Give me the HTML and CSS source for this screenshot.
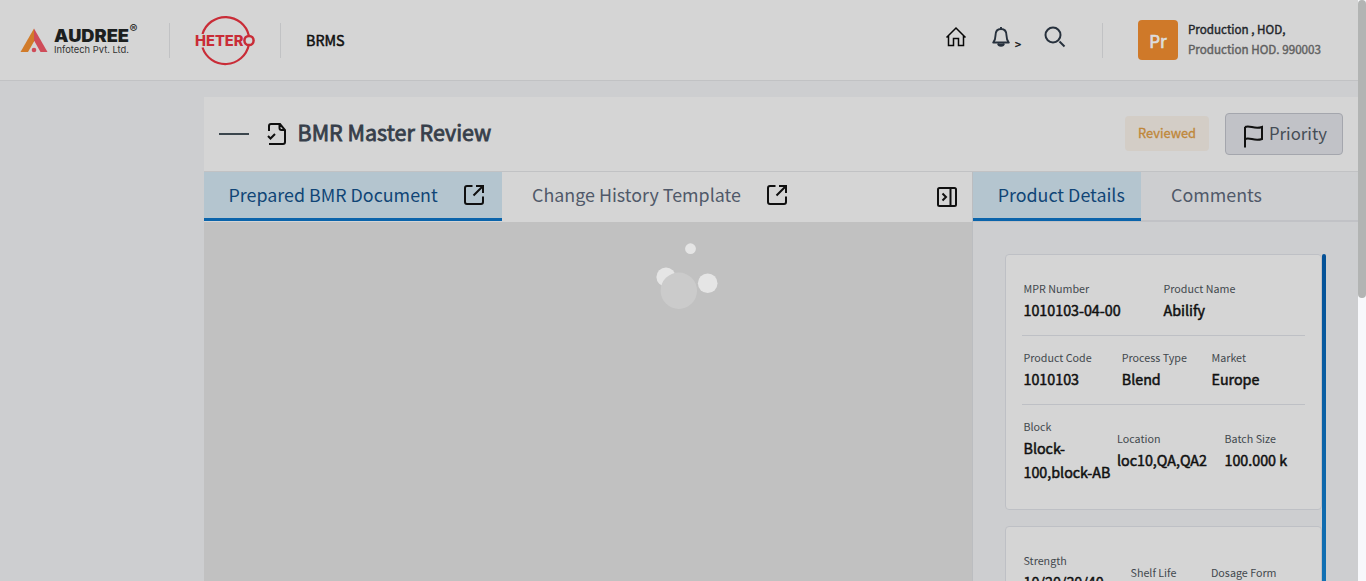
FILE: index.html
```html
<!DOCTYPE html>
<html lang="en">
<head>
<meta charset="utf-8">
<title>BMR Master Review</title>
<link rel="stylesheet" href="styles.css">
</head>
<body>
<div class="app">
  <div class="page">
    <header class="header">
      <svg class="logo-audree" width="122" height="36" viewBox="0 -2 122 36">
        <path d="M14 5.500 L0.500 29 H8 L14 18.500Z" fill="#d17b2a"/>
        <path d="M14 5.500 L27.500 29 H20.500 L14 17.500Z" fill="#cf4c59"/>
        <circle cx="14" cy="27" r="2.300" fill="#cf4c59"/>
        <text x="34" y="18.500" class="audree-name" textLength="75" lengthAdjust="spacingAndGlyphs">AUDREE</text>
        <text x="34" y="29.500" class="audree-sub" textLength="75" lengthAdjust="spacingAndGlyphs">Infotech Pvt. Ltd.</text>
        <text x="109.500" y="9.500" class="audree-reg">®</text>
      </svg>
      <i class="divider"></i>
      <svg class="logo-hetero" width="62" height="52" viewBox="0 0 62 52">
        <g fill="none" stroke="#c92c37" stroke-width="2.200">
          <path d="M8.500 20A24 24 0 0 1 54.800 21.500"/>
          <path d="M8.500 33.500A24 24 0 0 0 54.800 31"/>
          <circle cx="55" cy="26.500" r="4.600" stroke-width="2.500"/>
        </g>
        <text x="1" y="31.500" class="hetero-name" textLength="48.500" lengthAdjust="spacingAndGlyphs">HETER</text>
      </svg>
      <i class="divider"></i>
      <span class="product">BRMS</span>
      <nav class="actions">
        <svg class="home" width="22" height="22" viewBox="0 0 22 22" fill="none" stroke="#080808" stroke-width="1.500"><path d="M1.500 11.500 11 2l9.500 9.500M3.500 10v9.500h5V12.500h5v7h5V10"/></svg>
        <svg class="bell" width="18" height="22" viewBox="0 0 18 22" fill="none" stroke="#27313d" stroke-width="1.900" stroke-linejoin="round"><path d="M9 1v2M3.500 9.500C3.500 5.500 5.500 3 9 3s5.500 2.500 5.500 6.500c0 4 1 5.500 2.300 7H1.200c1.300-1.500 2.300-3 2.300-7Z"/><path d="M6 17.500c.5 3 5.500 3 6 0" fill="#27313d"/></svg>
        <span class="caret">&gt;</span>
        <svg class="search" width="22" height="22" viewBox="0 0 22 22" fill="none" stroke="#27313d" stroke-width="2"><circle cx="9" cy="9" r="7.500"/><path d="m15.500 15.500 5 5"/></svg>
      </nav>
      <i class="divider"></i>
      <div class="avatar">Pr</div>
      <div class="user"><div class="user-name">Production , HOD,</div><div class="user-role">Production HOD. 990003</div></div>
    </header>
    <main class="main">
      <section class="title-bar">
        <i class="dash"></i>
        <svg class="doc" width="20" height="24" viewBox="0 0 20 24" fill="none" stroke="#101010" stroke-width="2"><path d="M2 9V4q0-2 2-2h9l5 6v12q0 2-2 2H2M12.500 2v4q0 2 2 2H18M1 14l2.500 2.500L8 12"/></svg>
        <h1 class="title">BMR Master Review</h1>
        <span class="status">Reviewed</span>
        <button class="priority">
          <svg width="20" height="24" viewBox="0 0 20 24" fill="none" stroke="#101010" stroke-width="2"><path d="M2 23.500V3M2 3c5-2.500 9 3 17 0v12c-8 3-12-2.500-17 0"/></svg>
          <span>Priority</span>
        </button>
      </section>
      <div class="columns">
        <section class="document">
          <div class="tabs">
            <div class="tab tab-doc active"><span>Prepared BMR Document</span>
              <svg width="22" height="22" viewBox="0 0 22 22" fill="none" stroke="#101010" stroke-width="2"><path d="M9.500 2H4Q2 2 2 4v14q0 2 2 2h14q2 0 2-2v-5.500M13 2h7v7M20 2l-9.500 9.500"/></svg></div>
            <div class="tab tab-history"><span>Change History Template</span>
              <svg width="22" height="22" viewBox="0 0 22 22" fill="none" stroke="#101010" stroke-width="2"><path d="M9.500 2H4Q2 2 2 4v14q0 2 2 2h14q2 0 2-2v-5.500M13 2h7v7M20 2l-9.500 9.500"/></svg></div>
            <svg class="collapse" width="22" height="22" viewBox="0 0 22 22" fill="none" stroke="#101010" stroke-width="2"><rect x="2" y="2" width="18" height="18" rx="1.500"/><path d="M14.500 2v18M6.500 7.500 10 11l-3.500 3.500"/></svg>
          </div>
          <div class="preview"></div>
        </section>
        <aside class="details">
          <div class="tabs side-tabs">
            <div class="tab tab-product active"><span>Product Details</span></div>
            <div class="tab tab-comments"><span>Comments</span></div>
          </div>
          <div class="cards">
            <div class="card-list">
              <div class="card">
                <div class="row row-a"><div><div class="label">MPR Number</div><div class="value">1010103-04-00</div></div><div><div class="label">Product Name</div><div class="value">Abilify</div></div></div>
                <div class="row row-b"><div><div class="label">Product Code</div><div class="value">1010103</div></div><div><div class="label">Process Type</div><div class="value">Blend</div></div><div><div class="label">Market</div><div class="value">Europe</div></div></div>
                <div class="row row-c"><div><div class="label">Block</div><div class="value">Block-<br>100,block-AB</div></div><div><div class="label">Location</div><div class="value">loc10,QA,QA2</div></div><div><div class="label">Batch Size</div><div class="value">100.000 k</div></div></div>
              </div>
              <div class="card">
                <div class="row row-d"><div class="strength"><div class="label">Strength</div><div class="value">10/20/30/40</div></div><div><div class="label">Shelf Life</div></div><div><div class="label">Dosage Form</div></div></div>
              </div>
            </div>
            <i class="rail"></i>
          </div>
        </aside>
      </div>
    </main>
  </div>
  <div class="scrollbar"><i class="thumb"></i></div>
  <svg class="loader" width="66" height="70" viewBox="0 0 66 70"><circle cx="34.500" cy="8.700" r="5.400" fill="#e5e5e5"/><circle cx="10" cy="37" r="9.600" fill="#e5e5e5"/><circle cx="51.700" cy="43.300" r="9.800" fill="#e5e5e5"/><circle cx="22.800" cy="50.700" r="18.200" fill="#cbcbcb"/></svg>
</div>
</body>
</html>
```
FILE: styles.css
```css
* { box-sizing: border-box; }
body { margin: 0; font-family: "Noto Sans CJK SC", "Noto Sans", sans-serif; color: #101010; }
svg { display: block; flex: none; }
.app { display: flex; position: relative; width: 1366px; height: 581px; overflow: hidden; }
.page { width: 1358px; background: #cdced0; }
.header { display: flex; align-items: center; height: 81px; background: #d5d5d5; border-bottom: 1px solid #c1c2c4; padding-left: 20px; }
.divider { width: 1px; height: 35px; background: #c1c2c4; flex: none; }
.logo-audree { margin: -2px 27px 0 0; }
.audree-name { font: 900 17px Inter, sans-serif; fill: #1c1f1f; }
.audree-sub { font: 400 9.5px Inter, sans-serif; fill: #333; }
.audree-reg { font: 700 12px Inter, sans-serif; fill: #333; }
.logo-hetero { margin: 0 24px; }
.hetero-name { font: 800 14.5px Inter, sans-serif; fill: #c92c37; }
.product { width: 80px; margin-left: 25px; font-size: 14.3px; line-height: 20px; -webkit-text-stroke: .5px; }
.actions { display: flex; align-items: center; margin-left: 559px; width: 157px; height: 80px; padding-bottom: 6px; }
.bell { margin-left: 25px; }
.caret { margin: 14px 0 0 5px; width: 8px; font-size: 11px; line-height: 14px; -webkit-text-stroke: .4px; }
.search { margin-left: 21px; }
.avatar { width: 40px; height: 40px; margin-left: 35px; border-radius: 4px; background: #cf7929; color: #ddd; font-size: 17px; line-height: 41px; text-align: center; -webkit-text-stroke: .7px; }
.user { margin: -3px 0 0 10px; font-size: 11.65px; line-height: 20px; white-space: nowrap; -webkit-text-stroke: .4px; }
.user-name { color: #22252a; }
.user-role { color: #606060; }
.main { margin: 16px 0 0 204px; }
.title-bar { display: flex; align-items: center; height: 75px; padding: 0 15px; background: #d5d5d5; border-bottom: 1px solid #c1c2c4; }
.dash { width: 30px; height: 2px; background: #3b464d; }
.doc { margin-left: 18px; }
.title { margin: -4px auto 0 10.5px; font-size: 21.5px; font-weight: 400; line-height: 32px; color: #363e4a; -webkit-text-stroke: .8px; }
.status { width: 84px; height: 35px; margin-top: -1px; border-radius: 4px; background: #d3cdc6; color: #bf8739; font-size: 12.9px; line-height: 34px; text-align: center; -webkit-text-stroke: .3px; }
.priority { display: flex; align-items: center; width: 118px; height: 42px; margin-left: 16px; padding: 0 0 0 17px; border: 1px solid #a4a6ad; border-radius: 4px; background: #c1c2c7; font: 400 16.75px/24px "Noto Sans CJK SC", sans-serif; color: #454d56; }
.priority svg { margin-top: 4px; }
.priority span { margin: -2px 0 0 6px; }
.columns { display: flex; height: 420px; }
.document { width: 768px; }
.tabs { display: flex; height: 50px; background: #d5d5d5; }
.tab { display: flex; align-items: center; height: 49px; padding-bottom: 3px; font-size: 17.88px; line-height: 26px; color: #505969; white-space: nowrap; }
.tab span { margin-top: -2px; }
.active { background: #b4c5cf; border-bottom: 3px solid #0a64ab; padding-bottom: 0; color: #104576; }
.tab-doc { width: 298px; padding-left: 24.5px; }
.tab-doc span { width: 234.5px; }
.tab-history { width: 410px; padding-left: 30px; }
.tab-history span { width: 234px; }
.collapse { margin: 14px 0 0 24px; }
.preview { height: 370px; background: #c1c1c1; }
.details { width: 386px; border-left: 1px solid #bbbdc0; }
.side-tabs { background: #cdced0; border-bottom: 2px solid #c1c2c6; }
.tab-product { width: 168px; padding-left: 24.7px; }
.tab-comments { padding-left: 30px; }
.cards { display: flex; margin: 32px 0 0 32px; height: 338px; }
.card-list { width: 317px; }
.card { height: 256px; margin-bottom: 16px; padding: 12px 16px; border: 1px solid #bec0c5; border-radius: 4px; background: #d5d5d5; }
.rail { width: 4px; border-radius: 2px 2px 0 0; background: linear-gradient(#035096, #1272b5); }
.row { display: grid; align-items: center; height: 69px; padding: 0 1.500px 2px; }
.row-a { grid-template-columns: 140px 1fr; border-bottom: 1px solid #bec0c5; }
.row-b { grid-template-columns: 98.300px 89.700px 1fr; border-bottom: 1px solid #bec0c5; }
.row-c { grid-template-columns: 93.500px 107.500px 1fr; height: 92px; }
.row-d { grid-template-columns: 107px 80.500px 1fr; align-items: start; padding-top: 24px; }
.strength { margin-top: -12px; }
.label { margin-top: 1px; font-size: 10.72px; line-height: 18px; color: #42484d; white-space: nowrap; }
.value { font-size: 14.29px; line-height: 24px; white-space: nowrap; -webkit-text-stroke: .5px; }
.scrollbar { width: 8px; background: #f7f8fb; }
.thumb { display: block; height: 298px; border-radius: 4px; background: #b2b4b3; }
.loader { position: absolute; left: 656px; top: 240px; }
```
